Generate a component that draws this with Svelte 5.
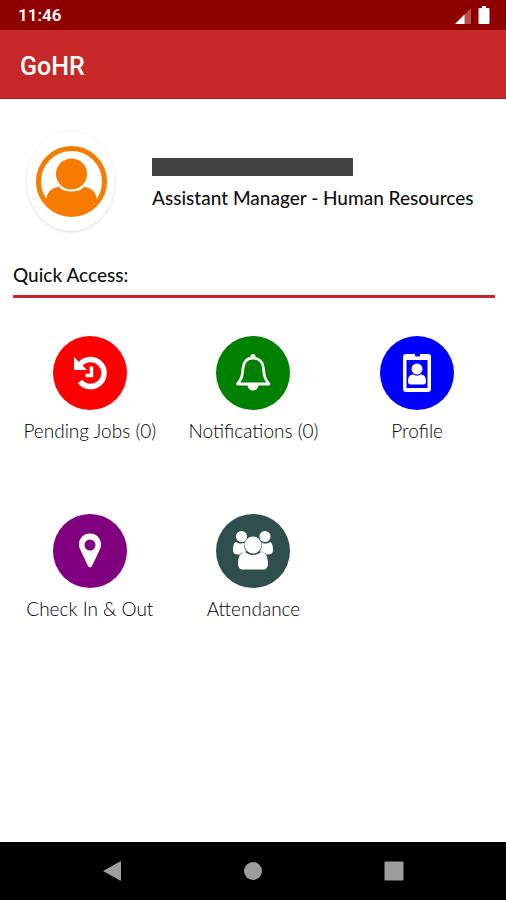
<script lang="ts">
  interface Shortcut {
    id: string;
    label: string;
    color: string;
    count?: number;
  }

  let shortcuts = $state<Shortcut[]>([
    { id: "pending", label: "Pending Jobs", color: "#ff0000", count: 0 },
    { id: "notifications", label: "Notifications", color: "#008000", count: 0 },
    { id: "profile", label: "Profile", color: "#0000ff" },
    { id: "checkin", label: "Check In & Out", color: "#800080" },
    { id: "attendance", label: "Attendance", color: "#2f4f4f" },
  ]);
</script>

<div class="screen">
  <div class="status-bar">
    <span>11:46</span>
    <div class="status-icons">
      <svg width="16" height="16" viewBox="0 0 16 16">
        <path d="M0 16 16 0v16z" fill="#b85050" />
        <path d="M0 16 9.500 6.500V16z" fill="#fff" />
      </svg>
      <svg width="12" height="18" viewBox="0 0 12 18">
        <path d="M4 0h4v2h2.500a1 1 0 0 1 1 1v14a1 1 0 0 1-1 1h-9a1 1 0 0 1-1-1V3a1 1 0 0 1 1-1H4z" fill="#fff" />
      </svg>
    </div>
  </div>

  <header class="app-bar">
    <h1>GoHR</h1>
  </header>

  <main>
    <section class="user">
      <div class="avatar">
        <svg width="72" height="72" viewBox="0 0 72 72">
          <circle cx="36.500" cy="36.500" r="33" fill="none" stroke="#f57c00" stroke-width="5" />
          <circle cx="36.500" cy="29" r="15.500" fill="#f57c00" />
          <path d="M11 55C12 47 17 42 24 42c3 3 7 4.500 12.500 4.500S46 45 49 42c7 0 12 5 13 13A31 31 0 0 1 11 55z" fill="#f57c00" />
        </svg>
      </div>
      <div class="user-info">
        <div class="name"></div>
        <div class="job">Assistant Manager - Human Resources</div>
      </div>
    </section>

    <h2>Quick Access:</h2>

    <nav class="shortcuts" aria-label="Quick Access">
      {#each shortcuts as item (item.id)}
        <button class="shortcut">
          <span class="circle" style="background: {item.color}">
            <svg width="74" height="74" viewBox="0 0 74 74" fill="#fff">
              {#if item.id === "pending"}
                <path d="M27.500 28A13.500 13.500 0 1 1 27 45.500" fill="none" stroke="#fff" stroke-width="5.500" />
                <path d="M21 21v13h13z" />
                <path d="M38.500 30.500v9H32.500" fill="none" stroke="#fff" stroke-width="3.500" />
              {:else if item.id === "notifications"}
                <path
                  d="M37 22c-6 0-9.500 4-10 10-.4 8-1.500 11-5.500 16h31.500c-4-5-5.200-8-5.600-16-.5-6-4.400-10-10.400-10z"
                  fill="none"
                  stroke="#fff"
                  stroke-width="2.800"
                  stroke-linejoin="round"
                />
                <circle cx="37" cy="20.500" r="2.500" />
                <path d="M31.500 49h11a5.500 5.500 0 0 1-11 0z" />
              {:else if item.id === "profile"}
                <path
                  fill-rule="evenodd"
                  d="M26 18h9v1.500a1 1 0 0 0 1 1h3a1 1 0 0 0 1-1V18h8a3 3 0 0 1 3 3v32a3 3 0 0 1-3 3H26a3 3 0 0 1-3-3V21a3 3 0 0 1 3-3zM26.500 24v28h21V24z"
                />
                <circle cx="37" cy="33" r="5.500" />
                <path d="M33 38.500c2.500 1.500 5.500 1.500 8 0 3.500 0 5 3 5 7 0 2-1 3-2.500 3h-13c-1.500 0-2.500-1-2.500-3 0-4 1.500-7 5-7z" />
              {:else if item.id === "checkin"}
                <path
                  fill-rule="evenodd"
                  d="M37 19.500c6 0 11 4.500 11 11 0 2-.5 3.500-1.200 5L39 52c-.8 1.700-3.200 1.700-4 0l-7.800-16.500c-.7-1.500-1.200-3-1.200-5 0-6.500 5-11 11-11zM37 25.500a5.500 5.500 0 1 0 0 11 5.500 5.500 0 0 0 0-11z"
                />
              {:else}
                <circle cx="25.500" cy="22.500" r="5.500" />
                <circle cx="49" cy="22.500" r="5.500" />
                <path d="M20 28c3 2 6.500 2 8.500.500-1 4 0 7 2 9-3 .2-5.500 1.200-7 3-4 .5-6.500-1-6.500-4 0-4 .5-7.500 3-8.500z" />
                <path d="M54 28c-3 2-6.500 2-8.500.500 1 4 0 7-2 9 3 .2 5.500 1.200 7 3 4 .5 6.500-1 6.500-4 0-4-.5-7.500-3-8.500z" />
                <circle cx="37" cy="31" r="8.500" />
                <path d="M29 38c5 4 11 4 16 0 5 .5 7 5 7 12 0 3.500-2 5.500-5 5.500H27c-3 0-5-2-5-5.500 0-7 2-11.500 7-12z" />
              {/if}
            </svg>
          </span>
          <span class="label">{item.label}{item.count !== undefined ? ` (${item.count})` : ""}</span>
        </button>
      {/each}
    </nav>
  </main>

  <footer class="nav-bar">
    <button aria-label="Back">
      <svg width="20" height="20" viewBox="0 0 20 20"><path d="M1 10 18 0.500q1-.5 1 .5v18q0 1-1 .5z" fill="#9e9e9e" /></svg>
    </button>
    <button aria-label="Home">
      <svg width="20" height="20" viewBox="0 0 20 20"><circle cx="10" cy="10" r="9" fill="#9e9e9e" /></svg>
    </button>
    <button aria-label="Recent apps">
      <svg width="20" height="20" viewBox="0 0 20 20"><rect x="0.500" y="0.500" width="19" height="19" rx="1" fill="#9e9e9e" /></svg>
    </button>
  </footer>
</div>

<style>
  :global(body) {
    margin: 0;
    background: #fff;
  }

  .screen {
    min-height: 100vh;
    display: flex;
    flex-direction: column;
    font-family: Lato, "Liberation Sans", sans-serif;
    color: #111;
  }

  svg {
    display: block;
  }

  button {
    border: none;
    background: none;
    padding: 0;
    font: inherit;
    color: inherit;
    cursor: pointer;
  }

  .status-bar {
    height: 30px;
    padding: 0 16px 0 18px;
    display: flex;
    align-items: center;
    justify-content: space-between;
    background: #8e0000;
    color: #fff;
    font-family: Roboto, "Liberation Sans", sans-serif;
    font-size: 17px;
    font-weight: 600;
  }

  .status-icons {
    display: flex;
    align-items: flex-end;
    gap: 7px;
  }

  .app-bar {
    box-sizing: border-box;
    height: 69px;
    padding: 4px 20px 0;
    display: flex;
    align-items: center;
    background: #c62828;
    border-bottom: 1px solid #b71c1c;
  }

  h1 {
    margin: 0;
    color: #fff;
    font-family: Roboto, "Liberation Sans", sans-serif;
    font-size: 25px;
    font-weight: 500;
  }

  main {
    flex: 1;
    padding: 32px 11px 32px 13px;
  }

  .user {
    display: flex;
    align-items: center;
    gap: 37px;
    padding-left: 14px;
  }

  .avatar {
    width: 88px;
    height: 100px;
    flex-shrink: 0;
    display: flex;
    align-items: center;
    justify-content: center;
    border-radius: 50%;
    box-shadow: 0 1px 3px rgba(0, 0, 0, 0.15);
  }

  .user-info {
    padding-top: 6px;
  }

  .name {
    width: 201px;
    height: 18px;
    background: #424242;
  }

  .job {
    margin-top: 10px;
    font-size: 19px;
    line-height: 24px;
    font-weight: 500;
  }

  h2 {
    margin: 32px 0 0;
    padding-bottom: 8px;
    border-bottom: 3px solid #c62828;
    font-size: 19px;
    line-height: 24px;
    font-weight: 500;
  }

  .shortcuts {
    display: grid;
    grid-template-columns: repeat(3, 1fr);
    row-gap: 71px;
    margin: 38px -4px 0 -5px;
  }

  .shortcut {
    display: flex;
    flex-direction: column;
    align-items: center;
    gap: 9px;
  }

  .circle {
    border-radius: 50%;
  }

  .label {
    font-size: 19px;
    line-height: 24px;
    font-weight: 300;
    white-space: nowrap;
    color: #000;
  }

  .nav-bar {
    height: 58px;
    padding: 0 42px;
    display: grid;
    grid-template-columns: repeat(3, 1fr);
    background: #000;
  }

  .nav-bar button {
    display: flex;
    align-items: center;
    justify-content: center;
  }
</style>
